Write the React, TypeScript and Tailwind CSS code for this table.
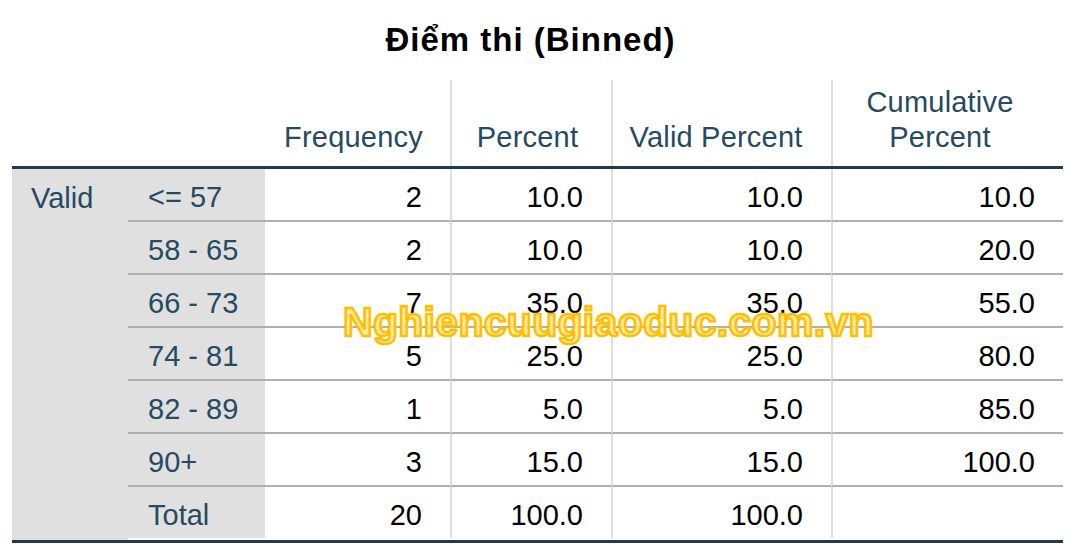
import React from "react";

const rows: { label: string; f: string; p: string; vp: string; cp: string }[] = [
  { label: "<= 57", f: "2", p: "10.0", vp: "10.0", cp: "10.0" },
  { label: "58 - 65", f: "2", p: "10.0", vp: "10.0", cp: "20.0" },
  { label: "66 - 73", f: "7", p: "35.0", vp: "35.0", cp: "55.0" },
  { label: "74 - 81", f: "5", p: "25.0", vp: "25.0", cp: "80.0" },
  { label: "82 - 89", f: "1", p: "5.0", vp: "5.0", cp: "85.0" },
  { label: "90+", f: "3", p: "15.0", vp: "15.0", cp: "100.0" },
  { label: "Total", f: "20", p: "100.0", vp: "100.0", cp: "" },
];

export default function App() {
  return (
    <div className="relative w-[1082px] h-[558px] bg-white overflow-hidden font-['Liberation_Sans',Arial,sans-serif]">
      <div className="ml-[12px] w-[1051px]">
        {/* Title */}
        <div className="pt-[20px] pr-[14px] h-[80px] text-center">
          <div className="text-[33px] leading-[40px] font-bold tracking-[1px] text-black">
            Điểm thi (Binned)
          </div>
        </div>

        {/* Header */}
        <div className="grid grid-cols-[116px_137px_185px_161px_220px_232px] h-[86px] text-[#264a60] text-[29px] leading-[35px] tracking-[0.2px]">
          <div />
          <div />
          <div className="flex items-end justify-center pr-[8px] pb-[11px]">Frequency</div>
          <div className="flex items-end justify-center pr-[8px] pb-[11px] border-l-2 border-[#dedede]">Percent</div>
          <div className="flex items-end justify-center pr-[12px] pb-[11px] border-l-2 border-[#dedede]">Valid Percent</div>
          <div className="flex items-end justify-center pr-[16px] pb-[11px] border-l-2 border-[#dedede] text-center">
            Cumulative
            <br />
            Percent
          </div>
        </div>
        <div className="h-[3px] bg-[#223b4c]" />

        {/* Body */}
        <div className="grid grid-cols-[116px_137px_185px_161px_220px_232px] grid-rows-[repeat(7,53px)] text-[29px] leading-[35px]">
          <div className="row-span-7 bg-[#e0e0e0] text-[#264a60] pl-[19px] pt-[12px]">Valid</div>
          {rows.map((r, i) => {
            const last = i === rows.length - 1;
            const bb = last ? "h-[51px]" : "border-b-2 border-[#b0b0b0]";
            return (
              <React.Fragment key={r.label}>
                <div className={`bg-[#e0e0e0] text-[#264a60] pl-[20px] pt-[5px] flex items-center ${bb}`}>{r.label}</div>
                <div className={`text-[#010205] pr-[28px] pt-[5px] flex items-center justify-end ${bb}`}>{r.f}</div>
                <div className={`text-[#010205] pr-[28px] pt-[5px] flex items-center justify-end border-l-2 border-l-[#dedede] ${bb}`}>{r.p}</div>
                <div className={`text-[#010205] pr-[28px] pt-[5px] flex items-center justify-end border-l-2 border-l-[#dedede] ${bb}`}>{r.vp}</div>
                <div className={`text-[#010205] pr-[28px] pt-[5px] flex items-center justify-end border-l-2 border-l-[#dedede] ${bb}`}>{r.cp}</div>
              </React.Fragment>
            );
          })}
        </div>
        <div className="h-[3px] bg-[#223b4c]" />
      </div>

      {/* Watermark */}
      <div className="absolute left-[343px] top-[302px] text-[41px] leading-[41px] font-bold tracking-[0.3px] text-[rgba(255,232,150,0.9)] [-webkit-text-stroke:2.5px_#ffbf00] whitespace-nowrap">
        Nghiencuugiaoduc.com.vn
      </div>
    </div>
  );
}
